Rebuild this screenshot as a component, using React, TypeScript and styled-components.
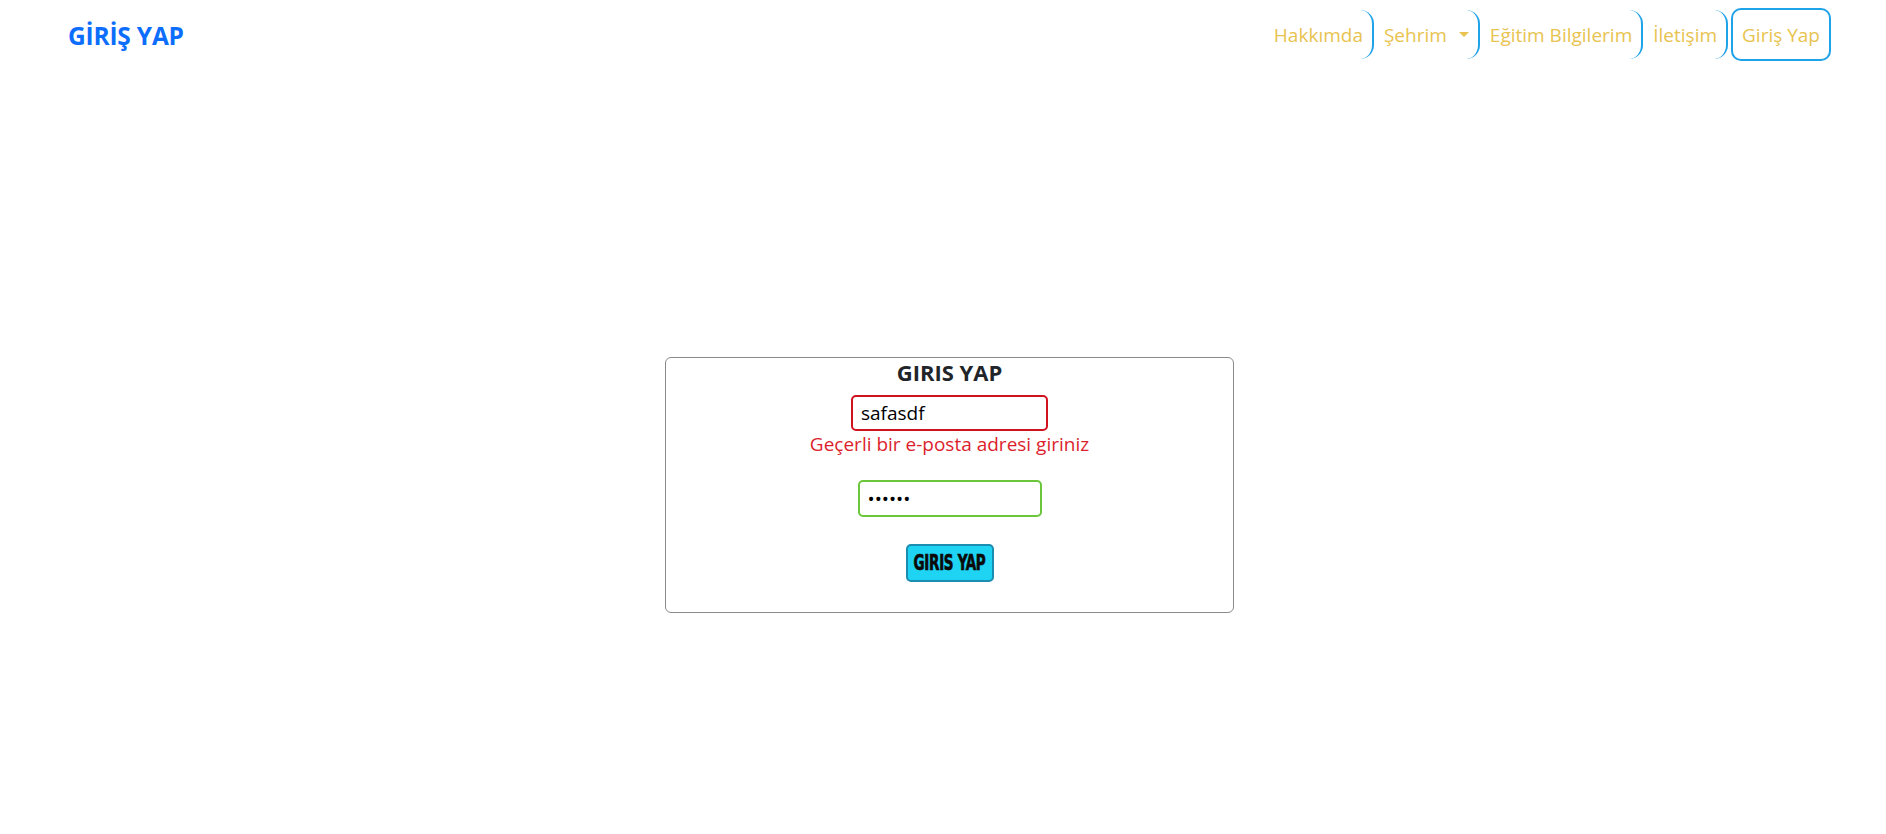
import React from "react";
import styled, { createGlobalStyle } from "styled-components";

const GlobalStyle = createGlobalStyle`
  html, body { margin: 0; padding: 0; background: #fff; }
  body { font-family: "Open Sans", "Noto Sans", sans-serif; color: #212529; }
  * { box-sizing: border-box; }
`;

const Header = styled.header`
  display: flex;
  align-items: center;
  justify-content: space-between;
  height: 69px;
  padding: 8px 55px 8px 68px;
`;

const Brand = styled.a`
  font-size: 24.5px;
  font-weight: 700;
  color: #0d6efd;
  text-decoration: none;
  letter-spacing: -0.2px;
  margin-top: 2px;
`;

const Nav = styled.nav`
  display: flex;
  align-items: center;
`;

const NavLink = styled.a`
  display: flex;
  align-items: center;
  height: 49px;
  padding: 0 9px 0 10px;
  font-size: 19px;
  color: #e8c34f;
  text-decoration: none;
  border-right: 2px solid #1ea2e8;
  border-radius: 0 14px 14px 0;
  white-space: nowrap;
`;

const Caret = styled.span`
  display: inline-block;
  margin-left: 12px;
  width: 0;
  height: 0;
  border-left: 5px solid transparent;
  border-right: 5px solid transparent;
  border-top: 5px solid #e8c34f;
`;

const LoginLink = styled.a`
  display: flex;
  align-items: center;
  height: 53px;
  margin-left: 3px;
  padding: 0 9px;
  font-size: 19px;
  color: #e8c34f;
  text-decoration: none;
  border: 2px solid #1ea2e8;
  border-radius: 10px;
  white-space: nowrap;
`;

const Main = styled.main`
  display: flex;
  justify-content: center;
  padding: 288px 0 0 13px;
`;

const Card = styled.form`
  width: 569px;
  height: 256px;
  border: 1px solid #8a8a8a;
  border-radius: 6px;
  display: flex;
  flex-direction: column;
  align-items: center;
`;

const Title = styled.h2`
  margin: 0;
  font-size: 22px;
  font-weight: 700;
  line-height: 28px;
  color: #212529;
`;

const Input = styled.input<{ $state: "error" | "ok" }>`
  width: ${(p) => (p.$state === "error" ? "197px" : "184px")};
  height: ${(p) => (p.$state === "error" ? "36px" : "37px")};
  border: 2px solid ${(p) => (p.$state === "error" ? "#d0121f" : "#6cc63c")};
  border-radius: 5px;
  padding: 0 8px;
  font-family: "Open Sans", "Noto Sans", sans-serif;
  font-size: 19px;
  color: #000;
  outline: none;
  background: #fff;
`;

const EmailWrap = styled.div`
  margin-top: 9px;
  display: flex;
`;

const ErrorText = styled.div`
  margin-top: 1px;
  font-size: 19px;
  line-height: 24px;
  color: #dc1e2d;
`;

const PasswordWrap = styled.div`
  margin-top: 24px;
  display: flex;
`;

const SubmitButton = styled.button`
  margin-top: 27px;
  width: 88px;
  height: 38px;
  display: flex;
  align-items: center;
  justify-content: center;
  background: #1fd3f2;
  border: 2px solid #1a8db0;
  border-radius: 5px;
  padding: 0;
  cursor: pointer;
`;

const ButtonLabel = styled.span`
  display: inline-block;
  font-family: "Liberation Sans Narrow", "DejaVu Sans Condensed", "Liberation Sans", sans-serif;
  font-weight: 700;
  font-size: 15px;
  color: #0a0a0a;
  letter-spacing: -0.3px;
  transform: scaleY(1.45);
  -webkit-text-stroke: 0.5px #0a0a0a;
`;

export default function App() {
  return (
    <>
      <GlobalStyle />
      <Header>
        <Brand href="#">GİRİŞ YAP</Brand>
        <Nav>
          <NavLink href="#">Hakkımda</NavLink>
          <NavLink href="#">
            Şehrim
            <Caret />
          </NavLink>
          <NavLink href="#">Eğitim Bilgilerim</NavLink>
          <NavLink href="#">İletişim</NavLink>
          <LoginLink href="#">Giriş Yap</LoginLink>
        </Nav>
      </Header>
      <Main>
        <Card onSubmit={(e) => e.preventDefault()}>
          <Title>GIRIS YAP</Title>
          <EmailWrap>
            <Input $state="error" type="text" defaultValue="safasdf" />
          </EmailWrap>
          <ErrorText>Geçerli bir e-posta adresi giriniz</ErrorText>
          <PasswordWrap>
            <Input $state="ok" type="password" defaultValue="123456" />
          </PasswordWrap>
          <SubmitButton type="submit">
            <ButtonLabel>GIRIS YAP</ButtonLabel>
          </SubmitButton>
        </Card>
      </Main>
    </>
  );
}
